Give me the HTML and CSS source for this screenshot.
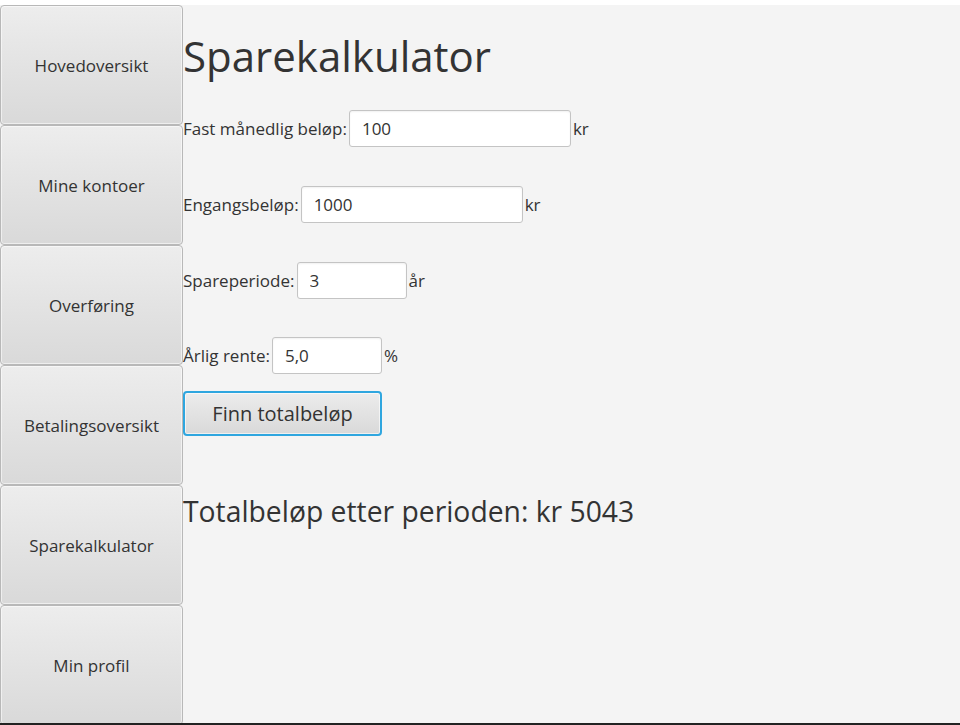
FILE: index.html
```html
<!DOCTYPE html>
<html lang="no">
<head>
<meta charset="utf-8">
<title>Sparekalkulator</title>
<link rel="stylesheet" href="styles.css">
</head>
<body>
<div class="app">
  <nav class="sidebar">
    <button class="nav-btn">Hovedoversikt</button>
    <button class="nav-btn">Mine kontoer</button>
    <button class="nav-btn">Overføring</button>
    <button class="nav-btn">Betalingsoversikt</button>
    <button class="nav-btn">Sparekalkulator</button>
    <button class="nav-btn">Min profil</button>
  </nav>
  <main class="content">
    <h1 class="title">Sparekalkulator</h1>
    <div class="row row-1">
      <span class="label">Fast månedlig beløp:</span>
      <input class="field field-wide" type="text" value="100">
      <span class="unit">kr</span>
    </div>
    <div class="row row-2">
      <span class="label">Engangsbeløp:</span>
      <input class="field field-wide" type="text" value="1000">
      <span class="unit">kr</span>
    </div>
    <div class="row row-3">
      <span class="label">Spareperiode:</span>
      <input class="field field-narrow" type="text" value="3">
      <span class="unit">år</span>
    </div>
    <div class="row row-4">
      <span class="label">Årlig rente:</span>
      <input class="field field-narrow" type="text" value="5,0">
      <span class="unit">%</span>
    </div>
    <button class="calc-btn">Finn totalbeløp</button>
    <p class="result">Totalbeløp etter perioden: kr 5043</p>
  </main>
</div>
<div class="taskbar-edge"></div>
</body>
</html>
```
FILE: styles.css
```css
html, body {
  margin: 0;
  padding: 0;
  height: 100%;
  overflow: hidden;
  background: #ffffff;
}
body {
  font-family: "Open Sans", "Noto Sans", sans-serif;
  color: #333333;
}
.app {
  margin-top: 5px;
  height: 720px;
  display: flex;
  background: #f4f4f4;
}
.sidebar {
  width: 183px;
  display: flex;
  flex-direction: column;
}
.nav-btn {
  height: 120px;
  width: 183px;
  margin: 0;
  border: 1px solid #b8b8b8;
  border-radius: 4px;
  background: linear-gradient(#ededed, #d9d9d9);
  box-shadow: inset 0 0 0 1px rgba(255,255,255,0.55);
  font-family: "Open Sans", "Noto Sans", sans-serif;
  font-size: 17px;
  color: #333333;
  padding: 0;
}
.content {
  flex: 1;
  display: flex;
  flex-direction: column;
  align-items: flex-start;
}
.title {
  margin: 21px 0 0 0;
  font-weight: 400;
  font-size: 42px;
  line-height: 60px;
  color: #333333;
  letter-spacing: 0;
}
.row {
  display: flex;
  align-items: center;
  font-size: 17px;
}
.row-1 { margin-top: 24px; }
.row-2 { margin-top: 39px; }
.row-3 { margin-top: 39px; }
.row-4 { margin-top: 38px; }
.label {
  margin-right: 2px;
}
.unit {
  margin-left: 2px;
}
.field {
  height: 37px;
  box-sizing: border-box;
  border: 1px solid #c4c4c4;
  border-radius: 3px;
  background: #ffffff;
  box-shadow: inset 0 1px 2px rgba(0,0,0,0.06);
  padding: 0 12px;
  font-family: "Open Sans", "Noto Sans", sans-serif;
  font-size: 17px;
  color: #333333;
  outline: none;
}
.field-wide { width: 222px; }
.field-narrow { width: 110px; }
.calc-btn {
  margin-top: 17px;
  width: 199px;
  height: 45px;
  border: 2px solid #2fa6df;
  border-radius: 4px;
  background: linear-gradient(#ececec, #d9d9d9);
  box-shadow: inset 0 0 0 1px rgba(255,255,255,0.6);
  font-family: "Open Sans", "Noto Sans", sans-serif;
  font-size: 20px;
  color: #333333;
  padding: 0;
}
.result {
  margin: 55px 0 0 0;
  font-size: 28.3px;
  line-height: 40px;
  color: #333333;
}
.taskbar-edge {
  position: fixed;
  left: 0;
  right: 0;
  bottom: 0;
  height: 2px;
  background: #222222;
}
```
